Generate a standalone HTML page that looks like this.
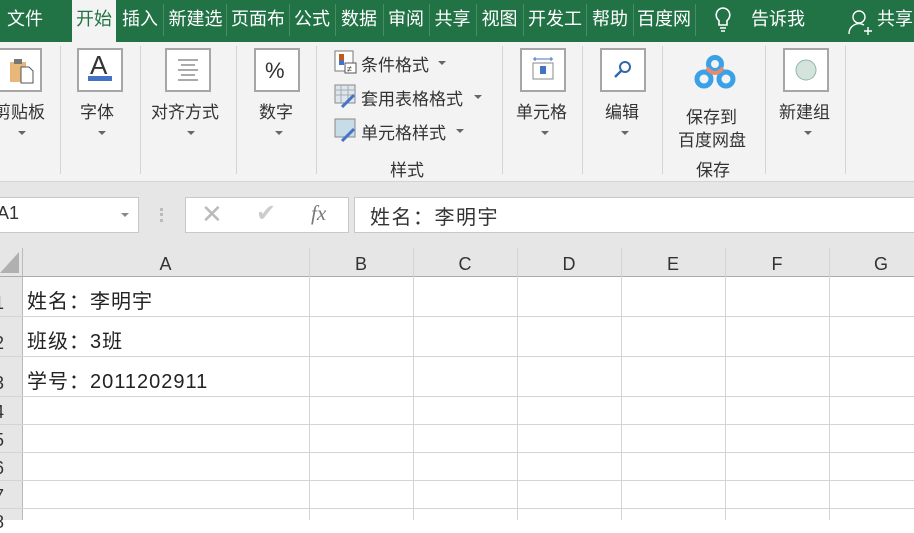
<!DOCTYPE html><html><head><meta charset="utf-8"><style>
*{margin:0;padding:0;box-sizing:border-box}
body{width:914px;height:520px;overflow:hidden;background:#fff;font-family:"Liberation Sans","Noto Sans CJK SC",sans-serif;position:relative;color:#222}
.a{position:absolute;white-space:nowrap}
.tab{position:absolute;top:0;height:42px;line-height:38px;color:#fff;font-size:18px;text-align:center}
.ts{position:absolute;top:4px;width:1px;height:32px;background:#4a8c66}
.sep{position:absolute;top:46px;width:1px;height:128px;background:#d4d4d4}
.box{position:absolute;top:48px;width:46px;height:44px;border:2px solid #a6a6a6;background:#fff}
.lbl{position:absolute;font-size:17px;color:#333;text-align:center;white-space:nowrap}
.dd{position:absolute;width:0;height:0;border-left:4px solid transparent;border-right:4px solid transparent;border-top:4px solid #666}
.hl{position:absolute;left:0;width:914px;height:1px;background:#d4d4d4}
.vl{position:absolute;top:248px;width:1px;height:272px;background:#d4d4d4}
.ch{position:absolute;top:248px;height:28px;line-height:32px;font-size:18px;text-align:center;color:#333}
.rh{position:absolute;left:-6px;font-size:18px;color:#333}
.cell{position:absolute;left:27px;font-size:20px;letter-spacing:1px;color:#222}
</style></head><body>
<div class="a" style="left:0;top:0;width:914px;height:42px;background:#217346"></div>
<div class="tab" style="left:4px;width:42px">文件</div>
<div class="a" style="left:72px;top:0;width:44px;height:42px;background:#f3f3f3"></div>
<div class="tab" style="left:72px;width:44px;color:#217346">开始</div>
<div class="tab" style="left:118px;width:44px">插入</div><div class="ts" style="left:163px"></div>
<div class="tab" style="left:164px;width:63px">新建选</div><div class="ts" style="left:226px"></div>
<div class="tab" style="left:227px;width:62px">页面布</div><div class="ts" style="left:289px"></div>
<div class="tab" style="left:289px;width:46px">公式</div><div class="ts" style="left:335px"></div>
<div class="tab" style="left:335px;width:48px">数据</div><div class="ts" style="left:383px"></div>
<div class="tab" style="left:383px;width:46px">审阅</div><div class="ts" style="left:429px"></div>
<div class="tab" style="left:429px;width:47px">共享</div><div class="ts" style="left:476px"></div>
<div class="tab" style="left:476px;width:47px">视图</div><div class="ts" style="left:523px"></div>
<div class="tab" style="left:523px;width:64px">开发工</div><div class="ts" style="left:586px"></div>
<div class="tab" style="left:587px;width:46px">帮助</div><div class="ts" style="left:633px"></div>
<div class="tab" style="left:633px;width:62px">百度网</div><div class="ts" style="left:695px"></div>
<svg class="a" style="left:713px;top:6px" width="20" height="28" viewBox="0 0 20 28"><path d="M10 2a7 7 0 0 0-4 12.6V19h8v-4.4A7 7 0 0 0 10 2z M7 22h6 M8 25h4" fill="none" stroke="#fff" stroke-width="1.6"/></svg>
<div class="tab" style="left:750px;width:56px">告诉我</div>
<svg class="a" style="left:848px;top:8px" width="24" height="28" viewBox="0 0 24 28"><circle cx="11" cy="9" r="6" fill="none" stroke="#fff" stroke-width="1.4"/><path d="M1 26a10 10 0 0 1 15-9 M16 23h8 M20 19v8" fill="none" stroke="#fff" stroke-width="1.4"/></svg>
<div class="tab" style="left:877px;width:40px;text-align:left">共享</div>

<div class="a" style="left:0;top:42px;width:914px;height:139px;background:#f3f3f3"></div>
<div class="a" style="left:0;top:181px;width:914px;height:67px;background:#e6e6e6"></div>
<div class="a" style="left:0;top:181px;width:914px;height:1px;background:#d4d4d4"></div>
<div class="sep" style="left:60px"></div><div class="sep" style="left:140px"></div><div class="sep" style="left:236px"></div><div class="sep" style="left:316px"></div><div class="sep" style="left:502px"></div><div class="sep" style="left:582px"></div><div class="sep" style="left:662px"></div><div class="sep" style="left:765px"></div><div class="sep" style="left:845px"></div>

<div class="box" style="left:-4px"></div>
<svg class="a" style="left:8px;top:58px" width="26" height="26"><rect x="2" y="4" width="16" height="20" fill="#e8b87a"/><rect x="6" y="1" width="8" height="5" fill="#777"/><path d="M13 9h8l4 4v12H13z" fill="#fff" stroke="#555"/></svg>
<div class="lbl" style="left:-6px;top:98px">剪贴板</div><div class="dd" style="left:18px;top:131px"></div>

<div class="box" style="left:77px"></div>
<div class="a" style="left:90px;top:50px;font-size:26px;color:#333">A</div>
<div class="a" style="left:88px;top:76px;width:24px;height:5px;background:#4472c4"></div>
<div class="lbl" style="left:80px;top:98px">字体</div><div class="dd" style="left:98px;top:131px"></div>

<div class="box" style="left:165px"></div>
<svg class="a" style="left:176px;top:58px" width="24" height="24"><path d="M2 2h20M5 7h14M2 12h20M5 17h14M2 22h20" stroke="#555" stroke-width="1"/></svg>
<div class="lbl" style="left:151px;top:98px">对齐方式</div><div class="dd" style="left:187px;top:131px"></div>

<div class="box" style="left:254px"></div>
<div class="a" style="left:265px;top:58px;font-size:22px;color:#333">%</div>
<div class="lbl" style="left:259px;top:98px">数字</div><div class="dd" style="left:275px;top:131px"></div>

<svg class="a" style="left:334px;top:50px" width="24" height="24"><rect x="1" y="1" width="18" height="20" fill="#fff" stroke="#777"/><rect x="5" y="4" width="5" height="6" fill="#c55a11"/><rect x="5" y="10" width="5" height="5" fill="#4472c4"/><rect x="11" y="13" width="11" height="10" fill="#fff" stroke="#555"/><text x="13" y="22" font-size="9" fill="#333">≠</text></svg>
<div class="lbl" style="left:361px;top:51px">条件格式</div><div class="dd" style="left:438px;top:61px"></div>
<svg class="a" style="left:334px;top:84px" width="24" height="24"><rect x="1" y="1" width="20" height="18" fill="#dbe6ee" stroke="#888"/><path d="M1 6h20M1 11h20M7 1v18M14 1v18" stroke="#aaa"/><path d="M8 23l12-12" stroke="#4472c4" stroke-width="3"/></svg>
<div class="lbl" style="left:361px;top:85px">套用表格格式</div><div class="dd" style="left:474px;top:95px"></div>
<svg class="a" style="left:334px;top:118px" width="24" height="24"><rect x="1" y="1" width="20" height="18" fill="#c8dce8" stroke="#888"/><path d="M8 23l12-12" stroke="#4472c4" stroke-width="3"/></svg>
<div class="lbl" style="left:361px;top:119px">单元格样式</div><div class="dd" style="left:456px;top:129px"></div>
<div class="lbl" style="left:390px;top:156px">样式</div>

<div class="box" style="left:520px"></div>
<svg class="a" style="left:530px;top:56px" width="26" height="26"><path d="M3 3h20M5 1v4M21 1v4" stroke="#4472c4"/><rect x="3" y="7" width="20" height="16" fill="#fff" stroke="#888"/><rect x="10" y="10" width="6" height="8" fill="#4472c4"/></svg>
<div class="lbl" style="left:516px;top:98px">单元格</div><div class="dd" style="left:541px;top:131px"></div>

<div class="box" style="left:600px"></div>
<svg class="a" style="left:610px;top:58px" width="26" height="26"><circle cx="15" cy="9" r="5" fill="none" stroke="#2e6aa8" stroke-width="2"/><path d="M11 13l-6 6" stroke="#2e6aa8" stroke-width="2.4"/></svg>
<div class="lbl" style="left:605px;top:98px">编辑</div><div class="dd" style="left:621px;top:131px"></div>

<svg class="a" style="left:693px;top:55px" width="44" height="36" viewBox="0 0 44 36"><circle cx="11" cy="24" r="7" fill="none" stroke="#3aa0e8" stroke-width="5"/><circle cx="33" cy="24" r="7" fill="none" stroke="#3aa0e8" stroke-width="5"/><circle cx="22" cy="9" r="6.5" fill="none" stroke="#3aa0e8" stroke-width="5"/><path d="M14 13q8 10 16 0" fill="none" stroke="#e58a6a" stroke-width="4"/></svg>
<div class="lbl" style="left:686px;top:103px">保存到</div>
<div class="lbl" style="left:678px;top:126px">百度网盘</div>
<div class="lbl" style="left:696px;top:156px">保存</div>

<div class="box" style="left:783px"></div>
<svg class="a" style="left:793px;top:58px" width="26" height="26"><circle cx="13" cy="12" r="10" fill="#d4e4dc" stroke="#8fb8a4"/></svg>
<div class="lbl" style="left:779px;top:98px">新建组</div><div class="dd" style="left:804px;top:131px"></div>

<div class="a" style="left:-2px;top:197px;width:141px;height:36px;background:#fff;border:1px solid #c8c8c8"></div>
<div class="a" style="left:-3px;top:203px;font-size:18px;color:#333">A1</div>
<div class="dd" style="left:121px;top:213px;border-top-color:#888"></div>
<div class="a" style="left:160px;top:208px;width:3px;height:14px;border-left:3px dotted #bbb"></div>
<div class="a" style="left:185px;top:197px;width:164px;height:36px;background:#fff;border:1px solid #c8c8c8"></div>
<div class="a" style="left:201px;top:199px;font-size:26px;color:#bbb">✕</div>
<div class="a" style="left:256px;top:199px;font-size:24px;color:#ccc">✔</div>
<div class="a" style="left:311px;top:201px;font-size:21px;color:#777;font-style:italic;font-family:'Liberation Serif',serif">fx</div>
<div class="a" style="left:354px;top:197px;width:570px;height:36px;background:#fff;border:1px solid #c8c8c8"></div>
<div class="a" style="left:370px;top:201px;font-size:20px;letter-spacing:1.5px;color:#333">姓名：李明宇</div>

<div class="a" style="left:0;top:248px;width:914px;height:28px;background:#e6e6e6"></div>
<div class="a" style="left:0;top:276px;width:22px;height:244px;background:#e6e6e6"></div>
<svg class="a" style="left:0;top:250px" width="20" height="24"><path d="M19 2v21H0z" fill="#b0b0b0"/></svg>
<div class="a" style="left:0;top:276px;width:914px;height:1px;background:#aaa"></div>
<div class="a" style="left:22px;top:248px;width:1px;height:272px;background:#bbb"></div>
<div class="vl" style="left:309px"></div><div class="vl" style="left:413px"></div><div class="vl" style="left:517px"></div><div class="vl" style="left:621px"></div><div class="vl" style="left:725px"></div><div class="vl" style="left:829px"></div>
<div class="ch" style="left:22px;width:287px">A</div><div class="ch" style="left:309px;width:104px">B</div><div class="ch" style="left:413px;width:104px">C</div><div class="ch" style="left:517px;width:104px">D</div><div class="ch" style="left:621px;width:104px">E</div><div class="ch" style="left:725px;width:104px">F</div><div class="ch" style="left:829px;width:104px">G</div>
<div class="hl" style="top:316px"></div><div class="hl" style="top:356px"></div><div class="hl" style="top:396px"></div><div class="hl" style="top:424px"></div><div class="hl" style="top:452px"></div><div class="hl" style="top:480px"></div><div class="hl" style="top:508px"></div>
<div class="rh" style="top:293px">1</div><div class="rh" style="top:333px">2</div><div class="rh" style="top:373px">3</div><div class="rh" style="top:402px">4</div><div class="rh" style="top:430px">5</div><div class="rh" style="top:458px">6</div><div class="rh" style="top:486px">7</div><div class="rh" style="top:512px">8</div>
<div class="cell" style="top:285px">姓名：李明宇</div>
<div class="cell" style="top:325px">班级：3班</div>
<div class="cell" style="top:365px">学号：2011202911</div>
</body></html>
